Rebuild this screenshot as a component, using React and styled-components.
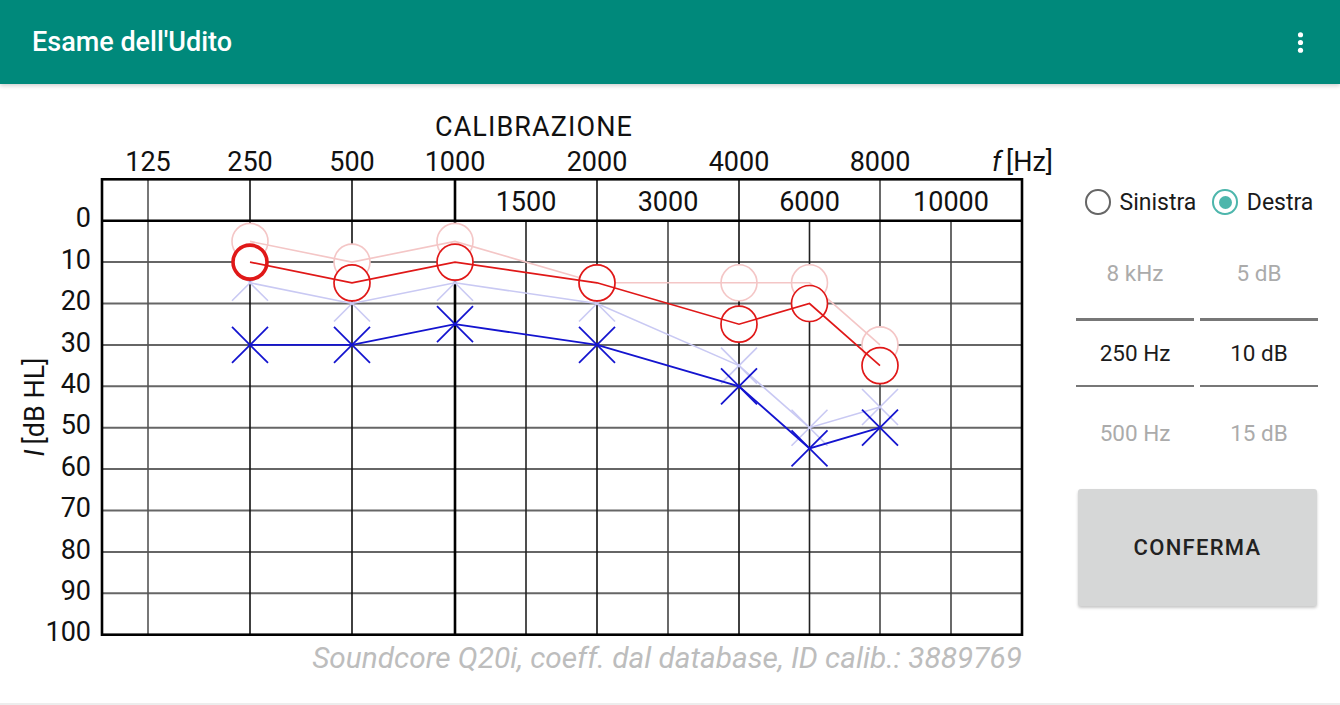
import React from "react"
import styled, { createGlobalStyle } from "styled-components"

const GlobalStyle = createGlobalStyle`
  html, body {
    margin: 0;
    padding: 0;
    background: #ffffff;
    font-family: Roboto, "Liberation Sans", Arial, sans-serif;
  }
`

// page coordinates of the audiogram
const LEFT = 102
const RIGHT = 1022
const yOf = db => 220.7 + db * 4.14
const TOP = yOf(-10)
const BOTTOM = yOf(100)

const FREQS = [250, 500, 1000, 2000, 4000, 6000, 8000]
const FX = { 250: 250, 500: 352, 1000: 455, 2000: 597, 4000: 739, 6000: 809.5, 8000: 880 }

const VERTICALS = [
  { x: 148, full: true, color: "#555", w: 1.6 },
  { x: 250, full: true, color: "#111", w: 1.6 },
  { x: 352, full: true, color: "#111", w: 1.6 },
  { x: 455, full: true, color: "#000", w: 2.6 },
  { x: 526, full: false, color: "#222", w: 1.6 },
  { x: 597, full: true, color: "#111", w: 1.6 },
  { x: 668, full: false, color: "#444", w: 1.6 },
  { x: 739, full: true, color: "#111", w: 1.6 },
  { x: 809.5, full: false, color: "#222", w: 1.6 },
  { x: 880, full: true, color: "#444", w: 1.6 },
  { x: 951, full: false, color: "#444", w: 1.6 },
]

const TOP_LABELS = [
  [148, "125"], [250, "250"], [352, "500"], [455, "1000"],
  [597, "2000"], [739, "4000"], [880, "8000"],
]
const SECOND_LABELS = [[526, "1500"], [668, "3000"], [809.5, "6000"], [951, "10000"]]

const SERIES = {
  lightLeft: { color: "#c9c9f3", kind: "x", values: [15, 20, 15, 20, 35, 50, 45], w: 1.6 },
  lightRight: { color: "#f4c6c6", kind: "o", values: [5, 10, 5, 15, 15, 15, 30], w: 1.6 },
  left: { color: "#1414cf", kind: "x", values: [30, 30, 25, 30, 40, 55, 50], w: 1.8 },
  right: { color: "#e01818", kind: "o", values: [10, 15, 10, 15, 25, 20, 35], w: 1.7 },
}

const pts = values => FREQS.map((f, i) => `${FX[f]},${yOf(values[i])}`).join(" ")

const Series = ({ data, selected }) => {
  const { color, kind, values, w } = data
  if (kind === "x") {
    return (
      <g stroke={color} strokeWidth={w} fill="none">
        <polyline points={pts(values)} />
        {FREQS.map((f, i) => {
          const cx = FX[f]
          const cy = yOf(values[i])
          return (
            <g key={f}>
              <line x1={cx - 18} y1={cy - 18} x2={cx + 18} y2={cy + 18} />
              <line x1={cx - 18} y1={cy + 18} x2={cx + 18} y2={cy - 18} />
            </g>
          )
        })}
      </g>
    )
  }
  return (
    <g stroke={color} strokeWidth={w}>
      {FREQS.map((f, i) => (
        <circle
          key={f}
          cx={FX[f]}
          cy={yOf(values[i])}
          r={selected === i ? 17 : 18}
          fill="#fff"
          strokeWidth={selected === i ? 3.6 : w}
        />
      ))}
      <polyline points={pts(values)} fill="none" />
    </g>
  )
}

const Audiogram = () => (
  <ChartSvg width="1060" height="543" viewBox="0 100 1060 543">
    <g fontFamily="Roboto, 'Liberation Sans', sans-serif" fontSize="27" fill="#111">
      <text x="534" y="135.6" textAnchor="middle" letterSpacing="1.1">CALIBRAZIONE</text>
      {TOP_LABELS.map(([x, t]) => (
        <text key={t} x={x} y="170.6" textAnchor="middle">{t}</text>
      ))}
      <text x="1053" y="170.6" textAnchor="end">
        <tspan fontStyle="italic">f</tspan>
        <tspan dx="5">[Hz]</tspan>
      </text>
      {SECOND_LABELS.map(([x, t]) => (
        <text key={t} x={x} y="210.6" textAnchor="middle">{t}</text>
      ))}
      {[0, 10, 20, 30, 40, 50, 60, 70, 80, 90, 100].map(d => (
        <text key={d} x="91" y={yOf(d) + 6.6} textAnchor="end">{d}</text>
      ))}
      <text x="43.6" y="407" textAnchor="middle" transform="rotate(-90 43.6 407)">
        <tspan fontStyle="italic">I</tspan>
        <tspan dx="5">[dB HL]</tspan>
      </text>
    </g>

    <g>
      {[10, 20, 30, 40, 50, 60, 70, 80, 90].map(d => (
        <line key={d} x1={LEFT} x2={RIGHT} y1={yOf(d)} y2={yOf(d)} stroke="#666" strokeWidth="2" />
      ))}
      {VERTICALS.map(v => (
        <line
          key={v.x}
          x1={v.x}
          x2={v.x}
          y1={v.full ? TOP : yOf(0)}
          y2={BOTTOM}
          stroke={v.color}
          strokeWidth={v.w}
        />
      ))}
      <line x1={LEFT} x2={RIGHT} y1={yOf(0)} y2={yOf(0)} stroke="#000" strokeWidth="2.6" />
    </g>

    <Series data={SERIES.lightLeft} />
    <Series data={SERIES.lightRight} />
    <Series data={SERIES.left} />
    <Series data={SERIES.right} selected={0} />

    <rect x={LEFT} y={TOP} width={RIGHT - LEFT} height={BOTTOM - TOP} fill="none" stroke="#000" strokeWidth="2.6" />
  </ChartSvg>
)

const MenuIcon = () => (
  <svg width="31" height="31" viewBox="0 0 24 24" fill="#fff">
    <circle cx="12" cy="6" r="2" />
    <circle cx="12" cy="12" r="2" />
    <circle cx="12" cy="18" r="2" />
  </svg>
)

const Picker = ({ above, value, below }) => (
  <PickerColumn>
    <PickerItem $h={90} $dim>{above}</PickerItem>
    <PickerDivider />
    <PickerItem $h={64}>{value}</PickerItem>
    <PickerDivider />
    <PickerItem $h={92} $dim>{below}</PickerItem>
  </PickerColumn>
)

const App = () => (
  <>
    <GlobalStyle />
    <Page>
      <TopBar>
        <Title>Esame dell'Udito</Title>
        <MenuButton>
          <MenuIcon />
        </MenuButton>
      </TopBar>
      <Main>
        <ChartColumn>
          <Audiogram />
          <Caption>Soundcore Q20i, coeff. dal database, ID calib.: 3889769</Caption>
        </ChartColumn>
        <Side>
          <RadioRow>
            <RadioItem>
              <RadioCircle />
              <RadioLabel>Sinistra</RadioLabel>
            </RadioItem>
            <RadioItem>
              <RadioCircle $checked />
              <RadioLabel>Destra</RadioLabel>
            </RadioItem>
          </RadioRow>
          <Pickers>
            <Picker above="8 kHz" value="250 Hz" below="500 Hz" />
            <Picker above="5 dB" value="10 dB" below="15 dB" />
          </Pickers>
          <ConfirmButton>CONFERMA</ConfirmButton>
        </Side>
      </Main>
      <BottomEdge />
    </Page>
  </>
)

export default App

const Page = styled.div`
  width: 1340px;
  height: 705px;
  display: flex;
  flex-direction: column;
  overflow: hidden;
  background: #fff;
`

const TopBar = styled.header`
  height: 84px;
  flex-shrink: 0;
  background: #00897b;
  display: flex;
  align-items: center;
  justify-content: space-between;
  padding: 0 24px 0 32px;
  box-sizing: border-box;
  box-shadow: 0 2px 4px rgba(0, 0, 0, 0.18);
  position: relative;
  z-index: 1;
`

const Title = styled.h1`
  margin: 0;
  color: #fff;
  font-size: 27px;
  font-weight: 500;
  letter-spacing: 0;
`

const MenuButton = styled.div`
  width: 31px;
  height: 31px;
  display: flex;
  margin-top: 1px;
`

const Main = styled.main`
  flex: 1;
  display: flex;
  min-height: 0;
`

const ChartColumn = styled.section`
  width: 1060px;
  flex-shrink: 0;
  display: flex;
  flex-direction: column;
  padding-top: 16px;
`

const ChartSvg = styled.svg`
  display: block;
  overflow: visible;
`

const Caption = styled.div`
  padding-right: 38px;
  text-align: right;
  font-size: 29.8px;
  line-height: 30px;
  font-style: italic;
  color: #bdbdbd;
`

const Side = styled.aside`
  width: 242px;
  margin-left: 16px;
  padding-top: 98px;
  display: flex;
  flex-direction: column;
`

const RadioRow = styled.div`
  height: 40px;
  display: flex;
  align-items: center;
  gap: 16px;
  padding-left: 9px;
`

const RadioItem = styled.label`
  display: flex;
  align-items: center;
  gap: 9px;
`

const RadioCircle = styled.span`
  width: 21.5px;
  height: 21.5px;
  border-radius: 50%;
  border: 2.2px solid ${p => (p.$checked ? "#4db6ac" : "#666")};
  display: flex;
  align-items: center;
  justify-content: center;
  &::after {
    content: "";
    width: 13px;
    height: 13px;
    border-radius: 50%;
    background: #4db6ac;
    display: ${p => (p.$checked ? "block" : "none")};
  }
`

const RadioLabel = styled.span`
  font-size: 23px;
  color: #1a1a1a;
`

const Pickers = styled.div`
  margin-top: 6px;
  display: grid;
  grid-template-columns: 1fr 1fr;
  gap: 6px;
`

const PickerColumn = styled.div`
  display: flex;
  flex-direction: column;
`

const PickerItem = styled.div`
  height: ${p => p.$h}px;
  display: flex;
  align-items: center;
  justify-content: center;
  font-size: 22.5px;
  color: ${p => (p.$dim ? "#ababab" : "#1c1c1c")};
`

const PickerDivider = styled.div`
  height: 2.5px;
  background: #777;
`

const ConfirmButton = styled.button`
  margin-top: 10px;
  margin-left: 2px;
  width: 239px;
  height: 117px;
  border: none;
  border-radius: 3px;
  background: #d6d7d7;
  box-shadow: 0 2px 3px rgba(0, 0, 0, 0.22);
  font-family: Roboto, "Liberation Sans", Arial, sans-serif;
  font-size: 22px;
  font-weight: 500;
  letter-spacing: 1.3px;
  color: #222;
`

const BottomEdge = styled.div`
  height: 2px;
  flex-shrink: 0;
  background: #ededed;
`
